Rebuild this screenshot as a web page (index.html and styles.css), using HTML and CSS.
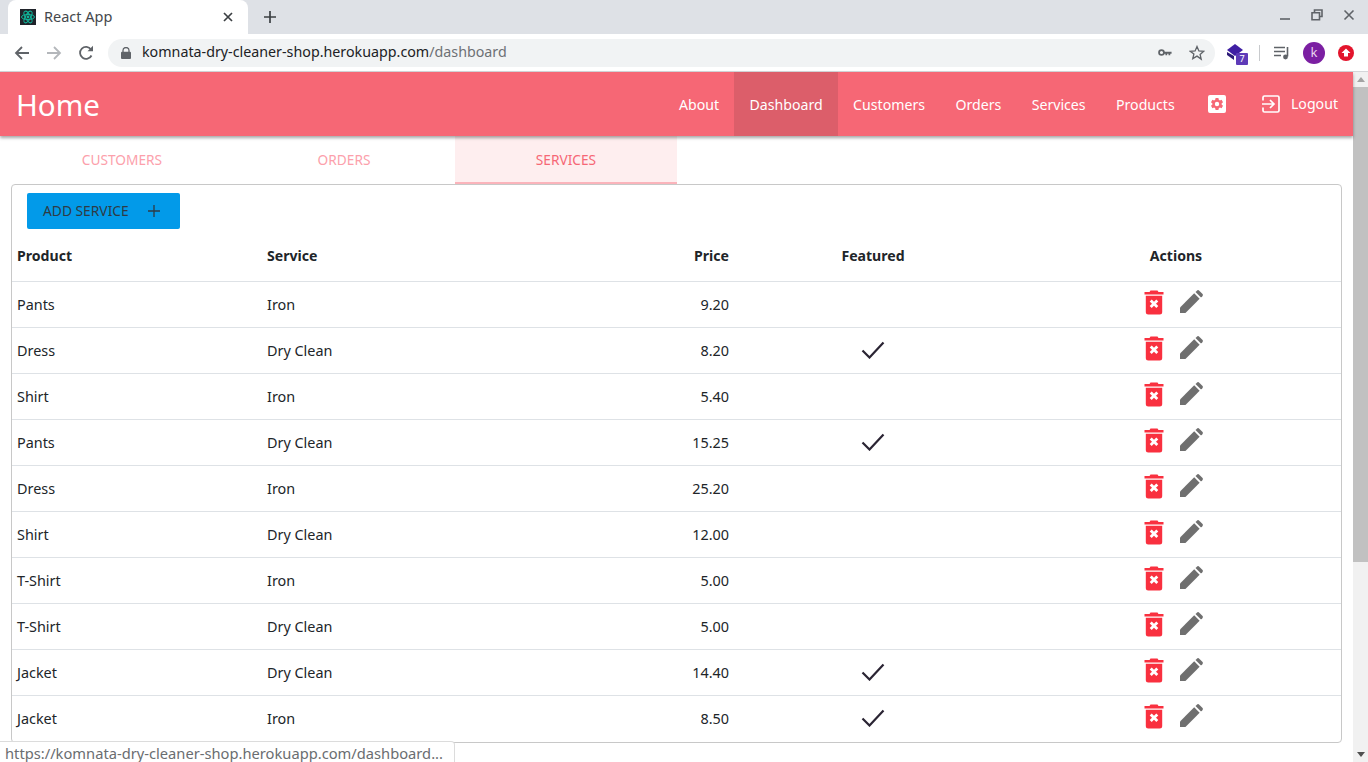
FILE: index.html
```html
<!DOCTYPE html>
<html lang="en">
<head>
<meta charset="utf-8">
<title>React App</title>
<link rel="stylesheet" href="styles.css">
</head>
<body>
<svg class="defs" width="0" height="0" aria-hidden="true">
  <symbol id="trash" viewBox="0 0 20 26">
    <path d="M6.500 1.500h7l1 1.600H19.500v2.400H.5V3.100h5z" fill="#f9303f"/>
    <path d="M1.800 6.800h16.400v16.200a2.500 2.500 0 0 1-2.500 2.500H4.300a2.500 2.500 0 0 1-2.500-2.500z" fill="#f9303f"/>
    <path d="M6.700 11.400 13.300 18M13.300 11.400 6.700 18" stroke="#fff" stroke-width="2.800" fill="none"/>
  </symbol>
  <symbol id="pencil" viewBox="0 0 24 24">
    <path d="M0 24v-5.700L14.800 3.500l5.700 5.700L5.700 24z" fill="#6f6f6f"/>
    <path d="M16.200 2.100 17.600.7a1.800 1.800 0 0 1 2.500 0l3.200 3.200a1.800 1.800 0 0 1 0 2.500l-1.400 1.400z" fill="#6f6f6f"/>
  </symbol>
  <symbol id="check" viewBox="0 0 24 18">
    <path d="M1.500 9.500 8.500 16.500 22.500 1.500" stroke="#2a2433" stroke-width="2.200" fill="none"/>
  </symbol>
</svg>

<header class="chrome">
  <div class="tabstrip">
    <div class="tab">
      <svg class="favicon" viewBox="0 0 16 16"><rect width="16" height="16" fill="#20232a"/><g fill="none" stroke="#10b59a" stroke-width="1"><ellipse cx="8" cy="8" rx="6.500" ry="2.600"/><ellipse cx="8" cy="8" rx="6.500" ry="2.600" transform="rotate(60 8 8)"/><ellipse cx="8" cy="8" rx="6.500" ry="2.600" transform="rotate(120 8 8)"/></g><circle cx="8" cy="8" r="1.400" fill="#10b59a"/></svg>
      <span class="tab-title">React App</span>
      <svg class="tab-close" viewBox="0 0 10 10"><path d="M1 1l8 8M9 1l-8 8" stroke="#3c4043" stroke-width="1.700"/></svg>
    </div>
    <svg class="new-tab" viewBox="0 0 12 12"><path d="M6 0v12M0 6h12" stroke="#3c4043" stroke-width="1.700"/></svg>
    <div class="window-controls">
      <svg viewBox="0 0 12 12"><path d="M1 10h10" stroke="#5f6368" stroke-width="1.600"/></svg>
      <svg viewBox="0 0 12 12"><path d="M3.500 3V1h7.500v6.500H9M1 3.700h7.500v7H1z" fill="none" stroke="#5f6368" stroke-width="1.600"/></svg>
      <svg viewBox="0 0 12 12"><path d="M1.500 1.500l9 9M10.500 1.500l-9 9" stroke="#5f6368" stroke-width="1.600"/></svg>
    </div>
  </div>
  <div class="toolbar">
    <svg class="nav-icon" viewBox="0 0 16 16"><path d="M15 8H2M8 2 2 8l6 6" fill="none" stroke="#5f6368" stroke-width="1.800"/></svg>
    <svg class="nav-icon" viewBox="0 0 16 16"><path d="M1 8h13M8 2l6 6-6 6" fill="none" stroke="#b4b7bb" stroke-width="1.800"/></svg>
    <svg class="nav-icon" viewBox="0 0 16 16"><path d="M13.500 10.500A6 6 0 1 1 13 4.500" fill="none" stroke="#5f6368" stroke-width="1.800"/><path d="M9.500 6.200H15V.7z" fill="#5f6368"/></svg>
    <div class="omnibox">
      <svg class="lock" viewBox="0 0 10 12"><path d="M2 5V3.500a3 3 0 0 1 6 0V5" fill="none" stroke="#5f6368" stroke-width="1.300"/><rect y="4.800" width="10" height="7.200" rx="1" fill="#5f6368"/></svg>
      <span class="url">komnata-dry-cleaner-shop.herokuapp.com<span class="url-path">/dashboard</span></span>
      <svg class="key" viewBox="0 0 16 10"><circle cx="4" cy="5" r="2.800" fill="none" stroke="#5f6368" stroke-width="2"/><path d="M6.500 4h9v2.500h-1.500v1.500h-2V6.500h-1.500V8h-2V6.500h-2z" fill="#5f6368"/></svg>
      <svg class="star" viewBox="0 0 16 16"><path d="M8 1.500l1.900 4.400 4.800.4-3.600 3.100 1.100 4.700L8 11.100l-4.200 2.500 1.100-4.700L1.300 6.300l4.800-.4z" fill="none" stroke="#5f6368" stroke-width="1.300"/></svg>
    </div>
    <div class="extensions">
      <span class="ext-stack">
        <svg viewBox="0 0 18 18"><path d="M9 1l8 6-8 6-8-6z" fill="#3f1fa3"/><path d="M1 9v3l7 5V13z" fill="#2c1a78"/></svg>
        <span class="ext-badge">7</span>
      </span>
      <span class="ext-divider"></span>
      <svg class="ext-queue" viewBox="0 0 16 14"><path d="M0 1.500h11M0 5.500h11M0 9.500h7" stroke="#5f6368" stroke-width="1.400"/><path d="M13.500 1v9.500" stroke="#5f6368" stroke-width="1.600"/><circle cx="11.500" cy="11" r="2.400" fill="#5f6368"/></svg>
      <span class="avatar">k</span>
      <svg class="ext-up" viewBox="0 0 16 16"><circle cx="8" cy="8" r="8" fill="#e3142c"/><path d="M8 3.500 12.500 8H10v3.500H6V8H3.500z" fill="#fff"/></svg>
    </div>
  </div>
</header>

<div class="viewport">
  <div class="page">
    <nav class="appbar">
      <a class="brand">Home</a>
      <div class="nav-links">
        <a class="nav-link">About</a>
        <a class="nav-link nav-link-active">Dashboard</a>
        <a class="nav-link">Customers</a>
        <a class="nav-link">Orders</a>
        <a class="nav-link">Services</a>
        <a class="nav-link">Products</a>
        <a class="nav-link nav-settings">
          <svg class="settings-icon" viewBox="0 0 18 18"><path fill-rule="evenodd" d="M2 0h14a2 2 0 0 1 2 2v14a2 2 0 0 1-2 2H2a2 2 0 0 1-2-2V2a2 2 0 0 1 2-2zM7.600 3l-.4 1.800-1.100.6-1.700-.6-1.400 2.400 1.400 1.200v1.200l-1.400 1.200 1.400 2.400 1.700-.6 1.100.6.400 1.800h2.800l.4-1.800 1.100-.6 1.700.6 1.400-2.400-1.400-1.200V8.400l1.400-1.200-1.400-2.400-1.700.6-1.100-.6L10.400 3zM9 6.800a2.200 2.200 0 1 1 0 4.400 2.200 2.200 0 0 1 0-4.400z" fill="#fff"/></svg>
        </a>
        <a class="nav-link nav-logout">
          <svg class="logout-icon" viewBox="0 0 18 18"><path d="M1 5.500V2.500A1.500 1.500 0 0 1 2.500 1h13A1.500 1.500 0 0 1 17 2.500v13a1.500 1.500 0 0 1-1.500 1.500h-13A1.500 1.500 0 0 1 1 15.500v-3" fill="none" stroke="#fff" stroke-width="1.700"/><path d="M0 9h11.500M8 5l4 4-4 4" fill="none" stroke="#fff" stroke-width="1.700"/></svg>
          <span>Logout</span>
        </a>
      </div>
    </nav>

    <div class="tabs">
      <a class="page-tab">CUSTOMERS</a>
      <a class="page-tab">ORDERS</a>
      <a class="page-tab page-tab-active">SERVICES</a>
    </div>

    <section class="card">
      <button class="add-btn">ADD SERVICE<svg class="add-plus" viewBox="0 0 12 12"><path d="M6 0v12M0 6h12" stroke="#2f3a44" stroke-width="1.300"/></svg></button>
      <div class="table">
        <div class="row row-head">
          <div class="cell">Product</div><div class="cell">Service</div><div class="cell cell-price">Price</div><div class="cell cell-center">Featured</div><div class="cell cell-center">Actions</div>
        </div>
        <div class="row">
          <div class="cell">Pants</div><div class="cell">Iron</div><div class="cell cell-price">9.20</div><div class="cell cell-center"></div>
          <div class="cell cell-actions"><svg class="icon-trash"><use href="#trash"/></svg><svg class="icon-pencil"><use href="#pencil"/></svg></div>
        </div>
        <div class="row">
          <div class="cell">Dress</div><div class="cell">Dry Clean</div><div class="cell cell-price">8.20</div><div class="cell cell-center"><svg class="icon-check"><use href="#check"/></svg></div>
          <div class="cell cell-actions"><svg class="icon-trash"><use href="#trash"/></svg><svg class="icon-pencil"><use href="#pencil"/></svg></div>
        </div>
        <div class="row">
          <div class="cell">Shirt</div><div class="cell">Iron</div><div class="cell cell-price">5.40</div><div class="cell cell-center"></div>
          <div class="cell cell-actions"><svg class="icon-trash"><use href="#trash"/></svg><svg class="icon-pencil"><use href="#pencil"/></svg></div>
        </div>
        <div class="row">
          <div class="cell">Pants</div><div class="cell">Dry Clean</div><div class="cell cell-price">15.25</div><div class="cell cell-center"><svg class="icon-check"><use href="#check"/></svg></div>
          <div class="cell cell-actions"><svg class="icon-trash"><use href="#trash"/></svg><svg class="icon-pencil"><use href="#pencil"/></svg></div>
        </div>
        <div class="row">
          <div class="cell">Dress</div><div class="cell">Iron</div><div class="cell cell-price">25.20</div><div class="cell cell-center"></div>
          <div class="cell cell-actions"><svg class="icon-trash"><use href="#trash"/></svg><svg class="icon-pencil"><use href="#pencil"/></svg></div>
        </div>
        <div class="row">
          <div class="cell">Shirt</div><div class="cell">Dry Clean</div><div class="cell cell-price">12.00</div><div class="cell cell-center"></div>
          <div class="cell cell-actions"><svg class="icon-trash"><use href="#trash"/></svg><svg class="icon-pencil"><use href="#pencil"/></svg></div>
        </div>
        <div class="row">
          <div class="cell">T-Shirt</div><div class="cell">Iron</div><div class="cell cell-price">5.00</div><div class="cell cell-center"></div>
          <div class="cell cell-actions"><svg class="icon-trash"><use href="#trash"/></svg><svg class="icon-pencil"><use href="#pencil"/></svg></div>
        </div>
        <div class="row">
          <div class="cell">T-Shirt</div><div class="cell">Dry Clean</div><div class="cell cell-price">5.00</div><div class="cell cell-center"></div>
          <div class="cell cell-actions"><svg class="icon-trash"><use href="#trash"/></svg><svg class="icon-pencil"><use href="#pencil"/></svg></div>
        </div>
        <div class="row">
          <div class="cell">Jacket</div><div class="cell">Dry Clean</div><div class="cell cell-price">14.40</div><div class="cell cell-center"><svg class="icon-check"><use href="#check"/></svg></div>
          <div class="cell cell-actions"><svg class="icon-trash"><use href="#trash"/></svg><svg class="icon-pencil"><use href="#pencil"/></svg></div>
        </div>
        <div class="row row-last">
          <div class="cell">Jacket</div><div class="cell">Iron</div><div class="cell cell-price">8.50</div><div class="cell cell-center"><svg class="icon-check"><use href="#check"/></svg></div>
          <div class="cell cell-actions"><svg class="icon-trash"><use href="#trash"/></svg><svg class="icon-pencil"><use href="#pencil"/></svg></div>
        </div>
      </div>
    </section>
  </div>
  <div class="scrollbar">
    <span class="arrow-up"></span>
    <span class="thumb"></span>
    <span class="arrow-down"></span>
  </div>
</div>

<div class="status-bubble">https://komnata-dry-cleaner-shop.herokuapp.com/dashboard...</div>
</body>
</html>
```
FILE: styles.css
```css
* { box-sizing: border-box; }
html, body { margin: 0; height: 762px; overflow: hidden; background: #fff; }
body { font-family: "Noto Sans", "Open Sans", sans-serif; color: #212529; position: relative; }
.defs { position: absolute; }

/* browser frame */
.chrome { height: 72px; display: flex; flex-direction: column; border-bottom: 1px solid #d4d6d9; }
.tabstrip { height: 34px; background: #dee1e6; display: flex; align-items: flex-end; padding-left: 8px; }
.tab { width: 240px; height: 34px; background: #fff; border-radius: 8px 8px 0 0; display: flex; align-items: center; padding: 0 11px 0 12px; }
.favicon { width: 16px; height: 16px; flex: none; }
.tab-title { margin: -2px 0 0 8px; font-size: 14.500px; color: #45484c; flex: 1; }
.tab-close { width: 10px; height: 10px; margin-right: 4px; }
.new-tab { width: 12px; height: 12px; margin: 0 0 11px 16px; }
.window-controls { margin-left: auto; display: flex; gap: 20px; padding: 0 13px 13px 0; }
.window-controls svg { width: 12px; height: 12px; }
.toolbar { flex: 1; background: #fff; display: flex; align-items: center; padding: 0 14px; }
.nav-icon { width: 16px; height: 16px; margin-right: 16px; flex: none; }
.omnibox { width: 1108px; height: 28px; margin-left: -2px; background: #f1f3f4; border-radius: 14px; display: flex; align-items: center; padding: 0 10px 0 13px; }
.lock { width: 10px; height: 12px; flex: none; }
.url { margin: -2px 0 0 11px; font-size: 14.270px; color: #202124; flex: 1; }
.url-path { color: #6d7074; }
.key { width: 14px; height: 9px; margin-right: 17px; }
.star { width: 16px; height: 16px; }
.extensions { display: flex; align-items: center; margin-left: 11px; }
.ext-stack { position: relative; width: 20px; height: 20px; display: block; }
.ext-stack svg { width: 18px; height: 18px; display: block; }
.ext-badge { position: absolute; left: 10px; top: 10px; width: 12px; height: 12px; border-radius: 1px; background: #5e3bb8; color: #fff; font-size: 9px; line-height: 12px; text-align: center; }
.ext-divider { width: 1px; height: 16px; background: #c8cacd; margin: 0 14px 0 13px; }
.ext-queue { width: 16px; height: 14px; }
.avatar { width: 22px; height: 22px; border-radius: 50%; background: #7b1fa2; color: #e8d5f0; font-size: 13px; line-height: 21px; text-align: center; margin-left: 13px; }
.ext-up { width: 16px; height: 16px; margin-left: 13px; }

/* page */
.viewport { display: flex; height: 690px; }
.page { flex: 1; min-width: 0; }
.appbar { height: 64px; background: #f66775; box-shadow: 0 2px 3px rgba(0,0,0,.35); display: flex; align-items: stretch; justify-content: space-between; position: relative; padding-left: 16px; }
.brand { font-size: 29.500px; line-height: 66px; color: #fff; }
.nav-links { display: flex; align-items: stretch; }
.nav-link { font-size: 14.150px; line-height: 66px; color: #fff; padding: 0 15.200px; }
.nav-link-active { background: #dc5e6a; }
.nav-settings { display: flex; align-items: center; padding: 0 15px; margin-left: 3px; }
.settings-icon { width: 18px; height: 18px; }
.nav-logout { display: flex; align-items: center; padding: 0 15px; margin-left: 6px; }
.logout-icon { width: 18px; height: 18px; margin-right: 11px; }

.tabs { display: flex; height: 48px; padding-left: 11px; }
.page-tab { width: 222px; height: 48px; text-align: center; font-size: 13.700px; line-height: 48px; color: #fca0ab; }
.page-tab-active { color: #f66775; background: #feeeef; border-bottom: 2px solid #fbb4bb; }

.card { margin: 0 11px; height: 559px; border: 1px solid #c8c8c8; border-radius: 4px; padding-top: 8px; }
.add-btn { display: flex; align-items: center; width: 153px; height: 36px; margin-left: 15px; padding: 0 0 2px 16px; border: 0; border-radius: 2px; background: #029ae9; color: #2f3a44; font: 13.800px "Noto Sans", sans-serif; }
.add-plus { width: 12px; height: 12px; margin: 2px 0 0 19px; }

.row { display: grid; grid-template-columns: 250px 236px 236px 278px 328px; height: 46px; padding-bottom: 1px; border-bottom: 1px solid #dee2e6; font-size: 14.400px; align-items: center; }
.row-head { height: 53px; padding-bottom: 0; font-weight: 700; font-size: 14.100px; }
.row-last { border-bottom-color: transparent; }
.cell { padding: 0 5px; }
.cell-price { text-align: right; }
.cell-center { text-align: center; }
.cell-actions { display: flex; justify-content: center; align-items: center; gap: 16px; padding: 0 6px 5px 0; }
.icon-check { width: 24px; height: 18px; display: block; margin: 0 auto; }
.icon-trash { width: 20px; height: 26px; display: block; }
.icon-pencil { width: 23px; height: 23px; display: block; }

/* scrollbar */
.scrollbar { width: 15px; background: #f1f1f1; display: flex; flex-direction: column; align-items: center; }
.arrow-up { width: 0; height: 0; margin-top: 5px; border: 4px solid transparent; border-top: 0; border-bottom: 5px solid #a3a3a3; }
.thumb { width: 100%; height: 475px; margin-top: 5px; background: #c1c1c1; }
.arrow-down { width: 0; height: 0; margin-top: auto; margin-bottom: 5px; border: 4px solid transparent; border-bottom: 0; border-top: 5px solid #505050; }

.status-bubble { position: absolute; left: 0; top: 741px; width: 455px; height: 21px; padding: 2px 0 0 5px; background: #fff; border: 1px solid #dcdcdc; border-left: 0; border-bottom: 0; border-radius: 0 4px 0 0; font-size: 14.700px; line-height: 18px; color: #6a6d70; white-space: nowrap; }
```
